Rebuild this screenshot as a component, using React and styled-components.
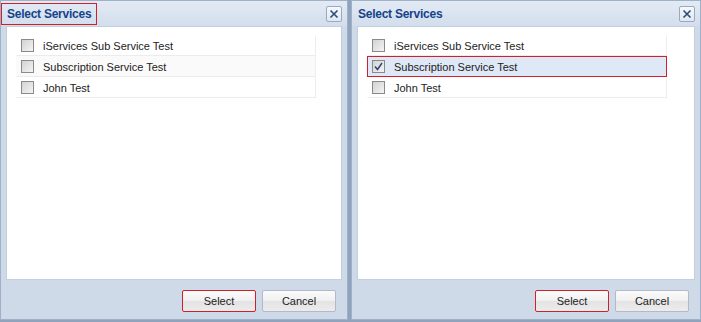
import React from "react"
import styled, { createGlobalStyle } from "styled-components"

const Global = createGlobalStyle`
  html, body { margin: 0; padding: 0; background: #fff; }
  body { font-family: "Liberation Sans", Arial, sans-serif; }
`

const Page = styled.div`
  display: flex;
  gap: 3px;
  width: 701px;
  height: 322px;
  background: #8fa3bd;
  box-sizing: border-box;
`

const Dialog = styled.div`
  display: flex;
  flex-direction: column;
  width: ${(p) => p.$width}px;
  height: 320px;
  background: #cfdae8;
  border: 1px solid #9fb1c9;
  box-sizing: border-box;
`

const Header = styled.div`
  display: flex;
  align-items: center;
  justify-content: space-between;
  height: 25px;
  padding: 0 5px 0 0;
  background: linear-gradient(#e2eaf4, #d3deec);
`

const Title = styled.div`
  font-size: 12px;
  line-height: 14px;
  letter-spacing: -0.25px;
  font-weight: bold;
  color: #15428b;
  padding: 3px 5px 3px 5px;
  border: 1px solid ${(p) => (p.$marked ? "#d0202a" : "transparent")};
`

const Close = styled.div`
  width: 14px;
  height: 14px;
  display: flex;
  align-items: center;
  justify-content: center;
  border: 1px solid #99a9c2;
  border-radius: 2px;
  background: linear-gradient(#f6f9fd, #dfe7f2);
`

const Body = styled.div`
  flex: 1;
  margin: 0 5px;
  background: #fff;
  border: 1px solid #c2cfdf;
  padding: 8px 9px;
`

const List = styled.div`
  width: 300px;
  display: flex;
  flex-direction: column;
`

const Row = styled.div`
  display: flex;
  align-items: center;
  gap: 9px;
  height: 21px;
  padding-left: 4px;
  box-sizing: border-box;
  font-size: 11px;
  color: #222;
  border: 1px solid ${(p) => (p.$marked ? "#d0202a" : "transparent")};
  border-bottom-color: ${(p) => (p.$marked ? "#d0202a" : "#ececec")};
  border-right-color: ${(p) => (p.$marked ? "#d0202a" : "#ededed")};
  background: ${(p) => (p.$checked ? "#dfe8f6" : p.$striped ? "#fafafa" : "#fff")};
`

const Box = styled.div`
  width: 11px;
  height: 11px;
  border: 1px solid #8a8a8a;
  background: linear-gradient(135deg, #d2d2d2, #f4f4f4);
  display: flex;
  align-items: center;
  justify-content: center;
`

const Footer = styled.div`
  height: 37px;
  display: flex;
  align-items: center;
  justify-content: flex-end;
  gap: 6px;
  padding: 2px 11px 0 0;
`

const Button = styled.button`
  width: 74px;
  height: 22px;
  font-family: "Liberation Sans", Arial, sans-serif;
  font-size: 11px;
  color: #222;
  border: 1px solid ${(p) => (p.$marked ? "#d0202a" : "#b5b8c8")};
  border-radius: 2px;
  background: linear-gradient(#fbfbfb 0%, #f0f0f0 50%, #e3e3e3 51%, #ececec 100%);
  padding: 0;
`

const items = ["iServices Sub Service Test", "Subscription Service Test", "John Test"]

function CloseIcon() {
  return (
    <svg width="10" height="10" viewBox="0 0 10 10">
      <path d="M1.5 1.5 L8.5 8.5 M8.5 1.5 L1.5 8.5" stroke="#2d4b78" strokeWidth="1.6" />
    </svg>
  )
}

function Check() {
  return (
    <svg width="9" height="9" viewBox="0 0 9 9">
      <path d="M1 4.5 L3.5 7.5 L8 1" stroke="#2b3f6a" strokeWidth="1.4" fill="none" />
    </svg>
  )
}

function SelectDialog({ width, titleMarked, selected }) {
  return (
    <Dialog $width={width}>
      <Header>
        <Title $marked={titleMarked}>Select Services</Title>
        <Close><CloseIcon /></Close>
      </Header>
      <Body>
        <List>
          {items.map((item, i) => (
            <Row key={item} $striped={i === 1} $checked={selected === i} $marked={selected === i}>
              <Box>{selected === i && <Check />}</Box>
              {item}
            </Row>
          ))}
        </List>
      </Body>
      <Footer>
        <Button $marked>Select</Button>
        <Button>Cancel</Button>
      </Footer>
    </Dialog>
  )
}

export default function App() {
  return (
    <>
      <Global />
      <Page>
        <SelectDialog width={348} titleMarked selected={-1} />
        <SelectDialog width={350} selected={1} />
      </Page>
    </>
  )
}
